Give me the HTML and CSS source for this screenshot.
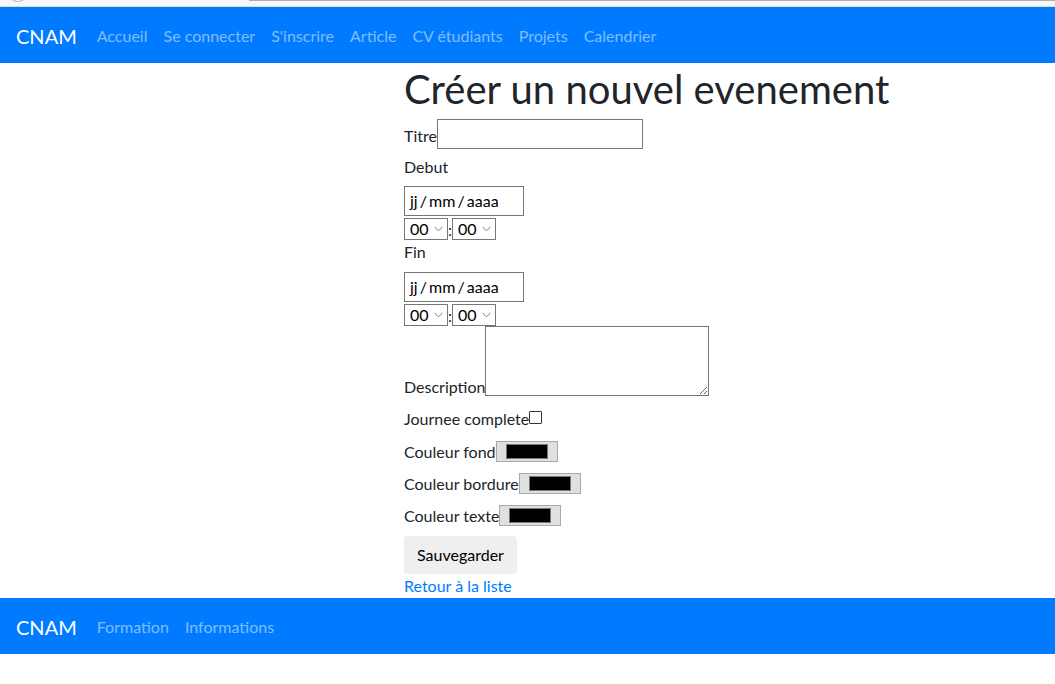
FILE: index.html
```
<!DOCTYPE html>
<html lang="fr">
<head>
<meta charset="utf-8">
<title>Créer un nouvel evenement</title>
<link rel="stylesheet" href="styles.css">
</head>
<body>
<div class="chrome"><span class="chrome-btn"></span><span class="chrome-bar"></span></div>
<nav class="navbar">
  <a class="brand" href="#">CNAM</a>
  <ul class="nav">
    <li><a class="nav-link" href="#">Accueil</a></li>
    <li><a class="nav-link" href="#">Se connecter</a></li>
    <li><a class="nav-link" href="#">S'inscrire</a></li>
    <li><a class="nav-link" href="#">Article</a></li>
    <li><a class="nav-link" href="#">CV étudiants</a></li>
    <li><a class="nav-link" href="#">Projets</a></li>
    <li><a class="nav-link" href="#">Calendrier</a></li>
  </ul>
</nav>
<main class="main">
  <h1 class="title">Créer un nouvel evenement</h1>
  <form class="form">
    <div class="row row-titre"><label class="lbl">Titre</label><input class="text-input" type="text"></div>
    <label class="lbl block lbl-debut">Debut</label>
    <div class="date-box">jj / mm / aaaa</div>
    <div class="time-row">
      <span class="sel">00<svg class="chev" width="9" height="6" viewBox="0 0 9 6"><path d="M0.5 0.8 L4.5 4.8 L8.5 0.8" fill="none" stroke="#777" stroke-width="1"/></svg></span><span class="colon">:</span><span class="sel">00<svg class="chev" width="9" height="6" viewBox="0 0 9 6"><path d="M0.5 0.8 L4.5 4.8 L8.5 0.8" fill="none" stroke="#777" stroke-width="1"/></svg></span>
    </div>
    <label class="lbl block">Fin</label>
    <div class="date-box date-fin">jj / mm / aaaa</div>
    <div class="time-row">
      <span class="sel">00<svg class="chev" width="9" height="6" viewBox="0 0 9 6"><path d="M0.5 0.8 L4.5 4.8 L8.5 0.8" fill="none" stroke="#777" stroke-width="1"/></svg></span><span class="colon">:</span><span class="sel">00<svg class="chev" width="9" height="6" viewBox="0 0 9 6"><path d="M0.5 0.8 L4.5 4.8 L8.5 0.8" fill="none" stroke="#777" stroke-width="1"/></svg></span>
    </div>
    <div class="row row-desc"><label class="lbl">Description</label><textarea class="area"></textarea></div>
    <div class="row row-check"><label class="lbl">Journee complete</label><span class="checkbox"></span></div>
    <div class="row row-color"><label class="lbl">Couleur fond</label><span class="color"><span class="swatch"></span></span></div>
    <div class="row row-color"><label class="lbl">Couleur bordure</label><span class="color"><span class="swatch"></span></span></div>
    <div class="row row-color"><label class="lbl">Couleur texte</label><span class="color"><span class="swatch"></span></span></div>
    <button class="save" type="button">Sauvegarder</button>
    <a class="back" href="#">Retour à la liste</a>
  </form>
</main>
<footer class="navbar">
  <a class="brand" href="#">CNAM</a>
  <ul class="nav">
    <li><a class="nav-link" href="#">Formation</a></li>
    <li><a class="nav-link" href="#">Informations</a></li>
  </ul>
</footer>
</body>
</html>
```

FILE: styles.css
```
* { box-sizing: border-box; }
html, body { margin: 0; padding: 0; }
body {
  font-family: Lato, "Open Sans", sans-serif;
  font-size: 16px;
  line-height: 1.5;
  color: #212529;
  background: #fff;
}
a { text-decoration: none; }

.chrome {
  height: 7px;
  background: #f7f7f7;
  border-bottom: 1px solid #dcdcdc;
  display: flex;
  align-items: flex-start;
  overflow: hidden;
}
.chrome-btn {
  flex: none;
  width: 22px;
  height: 22px;
  margin: -20px 0 0 7px;
  border: 1px solid #b5b5b5;
  border-radius: 50%;
  background: #fff;
}
.chrome-bar {
  flex: 1;
  height: 1px;
  margin-left: 220px;
  background: #b0b0b0;
}

.navbar {
  display: flex;
  align-items: center;
  height: 56px;
  padding: 9px 16px 7px;
  background: #007bff;
}
.brand {
  font-size: 20px;
  line-height: 30px;
  padding: 5px 0;
  margin-right: 12px;
  color: #fff;
}
.nav {
  display: flex;
  list-style: none;
  margin: 0;
  padding: 0;
}
.nav-link {
  display: block;
  padding: 8px;
  color: rgba(255, 255, 255, 0.5);
}

.main {
  padding-left: 404px;
  height: 535px;
}
.title {
  margin: 0 0 6px;
  padding-top: 2px;
  font-size: 40px;
  line-height: 48px;
  font-weight: 400;
}
.form {
  display: flex;
  flex-direction: column;
  align-items: flex-start;
}
.row {
  display: flex;
  align-items: flex-end;
}
.lbl { line-height: 24px; }
.block { display: block; }
.row-titre .lbl { margin-bottom: 1px; }
.text-input {
  width: 206px;
  height: 30px;
  margin: 0;
  padding: 1px 2px;
  border: 1px solid #767676;
  font: inherit;
}
.lbl-debut { margin-top: 6px; }
.date-box {
  width: 120px;
  height: 30px;
  margin-top: 7px;
  padding: 2px 0 0 5px;
  border: 1px solid #767676;
  line-height: 24px;
  color: #000;
  word-spacing: -2px;
}
.date-fin { margin-top: 8px; }
.time-row {
  display: flex;
  align-items: center;
  height: 22px;
  margin-top: 2px;
}
.sel {
  display: flex;
  align-items: center;
  justify-content: space-between;
  width: 44px;
  height: 22px;
  padding: 0 4px 0 5px;
  border: 1px solid #767676;
  background: #fff;
  color: #000;
  line-height: 20px;
}
.chev { display: block; }
.colon {
  width: 4px;
  text-align: center;
  line-height: 20px;
  padding-top: 2px;
}
.row-desc .lbl { margin-bottom: -3px; }
.area {
  display: block;
  width: 224px;
  height: 70px;
  margin: 0;
  border: 1px solid #767676;
  resize: both;
  font: inherit;
}
.row-check { margin-top: 11px; }
.checkbox {
  width: 13px;
  height: 13px;
  margin-bottom: 7px;
  border: 1px solid #333;
  border-radius: 1px;
  background: #fff;
}
.row-color { margin-top: 9px; height: 24px; }
.row-color + .row-color { margin-top: 8px; }
.color {
  display: flex;
  width: 62px;
  height: 21px;
  margin-bottom: 2px;
  padding: 2px 9px;
  border: 1px solid #a9a9a9;
  background: #e0e0e0;
}
.swatch {
  flex: 1;
  border: 1px solid #777;
  background: #000;
}
.save {
  margin-top: 8px;
  height: 38px;
  padding: 0 13px;
  border: none;
  border-radius: 4px;
  background: #efefef;
  color: #000;
  font: inherit;
  line-height: 24px;
}
.back {
  display: block;
  line-height: 24px;
  color: #007bff;
}
```
